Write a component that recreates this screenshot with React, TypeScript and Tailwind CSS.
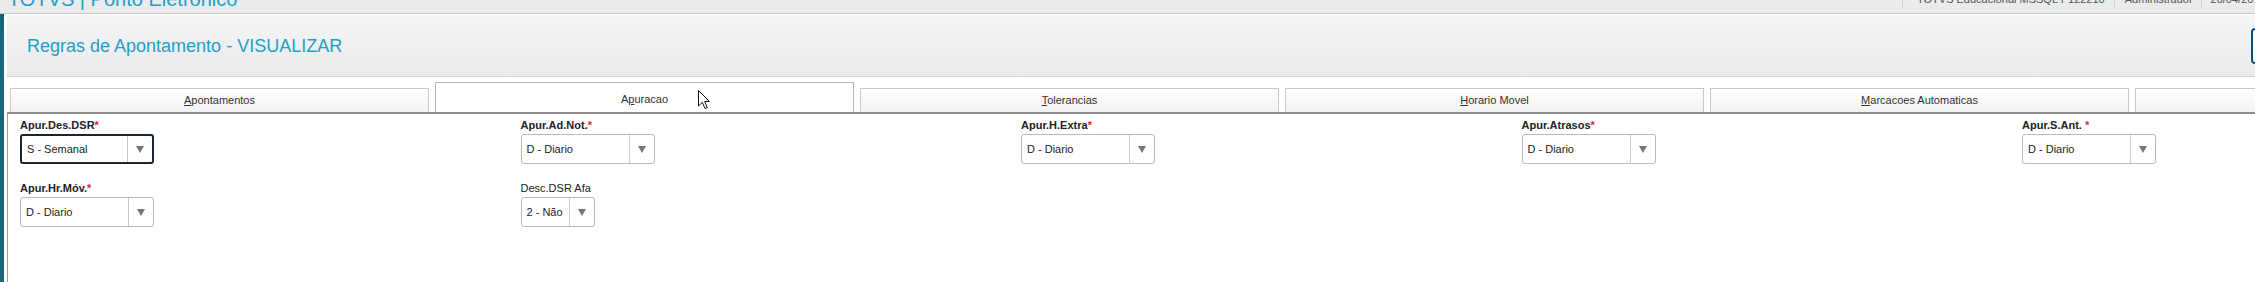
import React from "react";

type Field = {
    label: string;
    required?: boolean;
    value: string;
    focused?: boolean;
    small?: boolean;
};

const rowOne: Field[] = [
    { label: "Apur.Des.DSR", required: true, value: "S - Semanal", focused: true },
    { label: "Apur.Ad.Not.", required: true, value: "D - Diario" },
    { label: "Apur.H.Extra", required: true, value: "D - Diario" },
    { label: "Apur.Atrasos", required: true, value: "D - Diario" },
    { label: "Apur.S.Ant. ", required: true, value: "D - Diario" },
];

const rowTwo: Field[] = [
    { label: "Apur.Hr.Móv.", required: true, value: "D - Diario" },
    { label: "Desc.DSR Afa", value: "2 - Não", small: true },
];

const tabs = [
    { first: "A", rest: "pontamentos" },
    { first: "A", key: "p", rest: "uracao", active: true },
    { first: "T", rest: "olerancias" },
    { first: "H", rest: "orario Movel" },
    { first: "M", rest: "arcacoes Automaticas" },
    { first: "B", rest: "anco de Horas" },
];

function Arrow() {
    return (
        <svg width="8" height="7" viewBox="0 0 8 7">
            <polygon points="0,0 8,0 4,7" fill="#73777b" />
        </svg>
    );
}

function SelectField({ field }: { field: Field }) {
    const box = field.focused
        ? "border-2 border-[#1b2430]"
        : "border border-[#b8bbbe]";
    return (
        <div className="flex flex-col">
            <div className={`h-[14px] leading-[14px] text-[11px] text-[#222] ${field.required ? "font-bold" : ""}`}>
                {field.label}
                {field.required && <span className="text-[#e3262d]">*</span>}
            </div>
            <div
                className={`mt-[2px] h-[30px] flex bg-white rounded-[3px] ${box} ${field.small ? "w-[74px]" : "w-[134px]"}`}
            >
                <div className="flex-1 flex items-center pl-[5px] text-[11px] text-[#222] border-r border-[#c9cbcd]">
                    {field.value}
                </div>
                <div className="w-[24px] flex items-center justify-center">
                    <Arrow />
                </div>
            </div>
        </div>
    );
}

export default function App() {
    return (
        <div className="w-[2255px] h-[282px] overflow-hidden bg-white font-['Liberation_Sans',Arial,sans-serif] relative">
            {/* top bar */}
            <div className="h-[14px] bg-[#e9ebec] border-b border-[#c5c9cb] flex overflow-hidden">
                <div className="w-[1902px] shrink-0 pl-[8px]">
                    <div className="-mt-[11px] text-[20px] leading-[20px] text-[#22a0c9] whitespace-nowrap">
                        TOTVS | Ponto Eletronico
                    </div>
                </div>
                <div className="flex shrink-0 text-[11px] text-[#555] whitespace-nowrap">
                    <div className="border-l border-[#cfd2d4] h-[9px] pl-[14px] pr-[9px]">
                        <div className="-mt-[8px] leading-[14px]">TOTVS Educacional MSSQL P122210</div>
                    </div>
                    <div className="border-l border-[#cfd2d4] h-[9px] pl-[10px] pr-[8px]">
                        <div className="-mt-[8px] leading-[14px]">Administrador</div>
                    </div>
                    <div className="border-l border-[#cfd2d4] h-[9px] pl-[9px] pr-[10px]">
                        <div className="-mt-[8px] leading-[14px]">20/04/2018</div>
                    </div>
                </div>
            </div>

            <div className="flex h-[268px]">
                <div className="w-[4px] shrink-0 bg-[#18677f]" />
                <div className="ml-[3px] w-[2600px] shrink-0 flex flex-col">
                    {/* header */}
                    <div className="mt-[1px] h-[62px] flex items-center bg-gradient-to-b from-[#f4f5f5] to-[#e9ebec] border-b border-[#d0d3d5]">
                        <div className="w-[2244px] shrink-0 pl-[20px] text-[18px] leading-[22px] text-[#1e9fc8] whitespace-nowrap">
                            Regras de Apontamento - VISUALIZAR
                        </div>
                        <div className="w-[90px] h-[36px] shrink-0 border-2 border-[#0d4f78] rounded-[4px] bg-white" />
                    </div>

                    {/* tabs */}
                    <div className="mt-[5px] flex items-end gap-[6px] pl-[3px] border-b-2 border-[#8c8f92]">
                        {tabs.map((t, i) => (
                            <div
                                key={i}
                                className={`w-[419px] shrink-0 flex items-center justify-center text-[11px] text-[#333] border border-b-0 ${
                                    t.active
                                        ? "h-[30px] pt-[3px] bg-white border-[#b5b8bb]"
                                        : "h-[24px] bg-gradient-to-b from-white to-[#f1f2f3] border-[#c6c9cb]"
                                }`}
                            >
                                {t.key ? (
                                    <span>
                                        {t.first}
                                        <span className="underline">{t.key}</span>
                                        {t.rest}
                                    </span>
                                ) : (
                                    <span>
                                        <span className="underline">{t.first}</span>
                                        {t.rest}
                                    </span>
                                )}
                            </div>
                        ))}
                    </div>

                    {/* content */}
                    <div className="flex-1 border-l border-[#9b9ea1] pl-[12px] pt-[4px]">
                        <div className="grid grid-cols-[repeat(5,500.5px)]">
                            {rowOne.map((f) => (
                                <SelectField key={f.label} field={f} />
                            ))}
                        </div>
                        <div className="mt-[17px] grid grid-cols-[repeat(5,500.5px)]">
                            {rowTwo.map((f) => (
                                <SelectField key={f.label} field={f} />
                            ))}
                        </div>
                    </div>
                </div>
            </div>

            {/* mouse pointer */}
            <svg className="absolute left-[698px] top-[90px]" width="13" height="20" viewBox="0 0 13 20">
                <path d="M0.5 0.5 L0.5 16 L4.3 12.3 L7 18.5 L9.3 17.5 L6.7 11.5 L11.5 11.5 Z" fill="white" stroke="#111" strokeWidth="1" />
            </svg>
        </div>
    );
}
